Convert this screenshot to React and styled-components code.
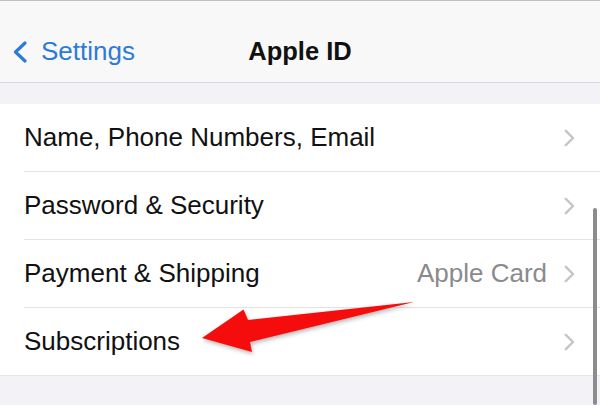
import React from "react";
import styled, { createGlobalStyle } from "styled-components";

const GlobalStyle = createGlobalStyle`
  html, body {
    margin: 0;
    padding: 0;
    background: #f2f2f7;
  }
  body {
    font-family: "Liberation Sans", Arial, sans-serif;
  }
`;

const rows = [
  { id: "name", label: "Name, Phone Numbers, Email" },
  { id: "password", label: "Password & Security" },
  { id: "payment", label: "Payment & Shipping", detail: "Apple Card" },
  { id: "subs", label: "Subscriptions" },
];

const BackChevron = () => (
  <svg width="16" height="22" viewBox="0 0 16 22" fill="none">
    <path
      d="M13 2 L3.5 11 L13 20"
      stroke="#2d7ad8"
      strokeWidth="3.2"
      strokeLinecap="round"
      strokeLinejoin="round"
    />
  </svg>
);

const RowChevron = () => (
  <svg width="11" height="18" viewBox="0 0 11 18" fill="none">
    <path
      d="M1.8 1.8 L9 9 L1.8 16.2"
      stroke="#c4c4c8"
      strokeWidth="2.4"
      strokeLinecap="round"
      strokeLinejoin="round"
    />
  </svg>
);

const App = () => {
  return (
    <Screen>
      <GlobalStyle />
      <NavBar>
        <BackButton type="button">
          <BackChevron />
          <span>Settings</span>
        </BackButton>
        <Title>Apple ID</Title>
        <div />
      </NavBar>

      <List>
        {rows.map((row, i) => (
          <Row key={row.id}>
            <RowInner $last={i === rows.length - 1}>
              <Label>{row.label}</Label>
              {row.detail && <Detail>{row.detail}</Detail>}
              <RowChevron />
            </RowInner>
          </Row>
        ))}
      </List>

      <Scrollbar />

      <Arrow viewBox="0 0 600 405">
        <defs>
          <filter id="shadow" x="-10%" y="-30%" width="120%" height="160%">
            <feDropShadow dx="1" dy="2" stdDeviation="2" floodColor="#000" floodOpacity="0.3" />
          </filter>
        </defs>
        <path
          d="M202 338 L243.5 309.5 Q246 315 248 320 L414 302 L250 342 Q251 347 252 352 Z"
          fill="#f50a0a"
          filter="url(#shadow)"
        />
      </Arrow>
    </Screen>
  );
};

const Screen = styled.div`
  position: relative;
  width: 600px;
  height: 405px;
  overflow: hidden;
  background: #f2f2f7;
`;

const NavBar = styled.header`
  box-sizing: border-box;
  height: 83px;
  padding-top: 20px;
  display: grid;
  grid-template-columns: 1fr auto 1fr;
  align-items: center;
  background: #f8f8f8;
  border-top: 1px solid #bfbfbf;
  border-bottom: 1px solid #d9d9dc;
`;

const BackButton = styled.button`
  display: flex;
  align-items: center;
  gap: 13px;
  justify-self: start;
  margin-left: 12px;
  padding: 0;
  border: none;
  background: transparent;
  color: #2d7ad8;
  font-family: "Liberation Sans", Arial, sans-serif;
  font-size: 26px;
  cursor: pointer;
`;

const Title = styled.h1`
  margin: 0;
  font-size: 25.5px;
  font-weight: 700;
  color: #111;
`;

const List = styled.ul`
  list-style: none;
  margin: 21px 0 0;
  padding: 0;
  background: #fff;
  box-shadow: 0 1px 0 #e6e6ea;
`;

const Row = styled.li`
  padding-left: 24px;
`;

const RowInner = styled.div`
  height: 67px;
  display: flex;
  align-items: center;
  padding-right: 25px;
  border-bottom: ${(p) => (p.$last ? "none" : "1px solid #e2e2e5")};
`;

const Label = styled.span`
  flex: 1;
  font-size: 26px;
  color: #111;
`;

const Detail = styled.span`
  margin-right: 17px;
  font-size: 26px;
  color: #8a8a8e;
`;

const Scrollbar = styled.div`
  position: absolute;
  right: 3px;
  top: 208px;
  bottom: 0;
  width: 4px;
  border-radius: 2px;
  background: #8c8c8c;
`;

const Arrow = styled.svg`
  position: absolute;
  left: 0;
  top: 0;
  width: 600px;
  height: 405px;
  pointer-events: none;
`;

export default App;
